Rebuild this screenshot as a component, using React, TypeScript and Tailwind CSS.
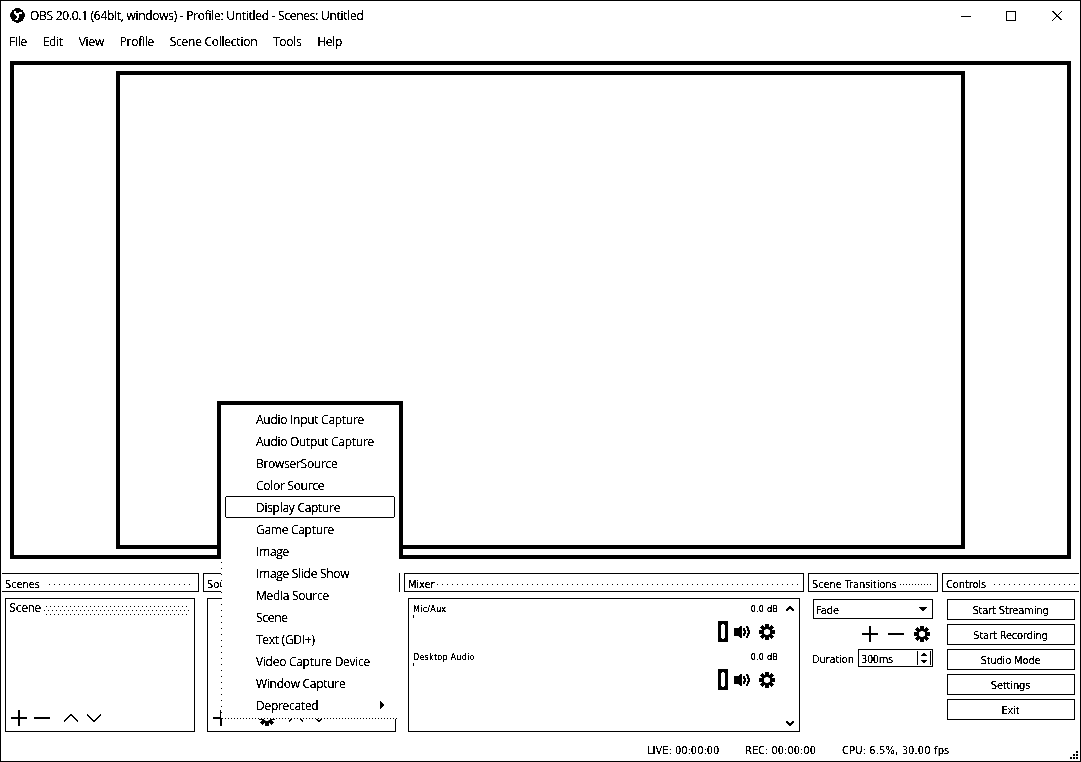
import React from "react";

const ui = "font-['Open_Sans',sans-serif] text-[12px] leading-[22px]";
const dlg = "font-['DejaVu_Sans_Condensed','DejaVu_Sans',sans-serif] text-[11px] leading-[13px] [font-stretch:condensed]";

function Plus({ className = "" }: { className?: string }) {
  return (
    <svg className={className} width="16" height="16" viewBox="0 0 16 16" shapeRendering="crispEdges">
      <path d="M7 0h2v16H7zM0 7h16v2H0z" />
    </svg>
  );
}

function Minus({ className = "" }: { className?: string }) {
  return (
    <svg className={className} width="16" height="16" viewBox="0 0 16 16" shapeRendering="crispEdges">
      <path d="M0 7h16v2H0z" />
    </svg>
  );
}

function Chevron({ down = false, className = "" }: { down?: boolean; className?: string }) {
  return (
    <svg className={className} width="14" height="8" viewBox="0 0 14 8" fill="none" stroke="black" strokeWidth="1.4">
      <path d={down ? "M0 .5l7 7 7-7" : "M0 7.5l7-7 7 7"} />
    </svg>
  );
}

function Gear({ className = "" }: { className?: string }) {
  return (
    <svg className={className} width="16" height="16" viewBox="0 0 16 16">
      <path
        fillRule="evenodd"
        d="M6.5 0h3v2.300l1.400.6L12.600 1.300l2.100 2.100L13 5.100l.6 1.400H16v3h-2.400L13 10.900l1.700 1.700-2.100 2.100L10.900 13l-1.400.6V16h-3v-2.400L5.100 13l-1.700 1.700-2.100-2.100L3 10.900l-.6-1.400H0v-3h2.400L3 5.100 1.300 3.400l2.100-2.100L5.100 3l1.400-.6zM8 5a3 3 0 1 0 0 6 3 3 0 0 0 0-6z"
      />
    </svg>
  );
}

function Speaker() {
  return (
    <svg width="16" height="14" viewBox="0 0 16 14">
      <path d="M0 3h4L7.500.500v13L4 11H0z" />
      <path d="M9.500 3.500q2.600 3.500 0 7M12.500 1q4.500 6 0 12" fill="none" stroke="black" strokeWidth="1.900" />
    </svg>
  );
}

function Dots({ className = "", dense = false }: { className?: string; dense?: boolean }) {
  return (
    <span
      className={`h-px ${
        dense
          ? "bg-[repeating-linear-gradient(90deg,black_0,black_1px,transparent_1px,transparent_3px)]"
          : "bg-[repeating-linear-gradient(90deg,black_0,black_1px,transparent_1px,transparent_5px)]"
      } ${className}`}
    />
  );
}

function DockTitle({
  children,
  className = "",
  dots = "",
  dense = false,
}: {
  children: React.ReactNode;
  className?: string;
  dots?: string;
  dense?: boolean;
}) {
  return (
    <div className={`flex h-[19px] items-center border border-black pl-[3px] pr-[4px] ${className}`}>
      <span className="pt-[3px] tracking-[-0.1px] whitespace-nowrap">{children}</span>
      <Dots dense={dense} className={`mt-[4px] flex-1 ${dots}`} />
    </div>
  );
}

function Channel({ name }: { name: string }) {
  return (
    <div className="h-[48px]">
      <div className="flex justify-between pr-px pt-[4px] text-[9px] leading-[12px]">
        <span className="tracking-[0.2px]">{name}</span>
        <span className="tracking-[0.2px]">0.0 dB</span>
      </div>
      <div className="h-[3px] w-px bg-black" />
      <div className="flex items-center justify-end pr-[4px] pt-[3px]">
        <span className="h-[21px] w-[10px] border-[3px] border-black">
          <span className="block h-full w-full rounded-[2px] shadow-[0_0_0_1px_black]" />
        </span>
        <span className="ml-[6px]"><Speaker /></span>
        <Gear className="ml-[9px]" />
      </div>
    </div>
  );
}

const sources = [
  "Audio Input Capture", "Audio Output Capture", "BrowserSource", "Color Source", "Display Capture",
  "Game Capture", "Image", "Image Slide Show", "Media Source", "Scene", "Text (GDI+)",
  "Video Capture Device", "Window Capture", "Deprecated",
];

function SourceMenu() {
  return (
    <div className={`absolute left-[216px] top-[400px] h-[319px] w-[186px] ${ui}`}>
      <div className="absolute inset-x-0 top-0 h-[158px] border-4 border-b-0 border-black bg-white" />
      <div className="absolute left-[4px] top-[157px] flex h-[161px] w-[178px] items-end bg-white">
        <span className="h-full w-px bg-[repeating-linear-gradient(0deg,black_0,black_1px,transparent_1px,transparent_6px)]" />
        <Dots dense className="flex-1" />
      </div>
      <ul className="relative px-[8px] pt-[7px]">
        {sources.map((s) => (
          <li
            key={s}
            className={`flex h-[22px] w-[170px] items-center justify-between border pl-[30px] pr-[10px] ${
              s === "Display Capture" ? "rounded-[2px] border-black" : "border-transparent"
            }`}
          >
            <span className="pt-[2px] tracking-[-0.28px]">{s}</span>
            {s === "Deprecated" && (
              <svg width="4" height="8" viewBox="0 0 4 8"><path d="M0 0l4 4-4 4z" /></svg>
            )}
          </li>
        ))}
      </ul>
    </div>
  );
}

export default function App() {
  return (
    <div className="relative flex h-[762px] w-[1081px] flex-col overflow-hidden border border-black bg-white text-black [filter:grayscale(1)_brightness(0.79)_contrast(20)]">
      <header className={`flex h-[29px] items-center pl-[9px] ${ui}`}>
        <svg width="15" height="15" viewBox="0 0 15 15">
          <circle cx="7.500" cy="7.500" r="7.200" />
          <path d="M4.500 2.500q0 3.500 3 4.500M12 5.500q-3-1.500-4.500 1.500M7.500 7q1.500 3-2 5" fill="none" stroke="white" strokeWidth="2" />
        </svg>
        <h1 className="ml-[5px] flex-1 tracking-[-0.28px]">OBS 20.0.1 (64bit, windows) - Profile: Untitled - Scenes: Untitled</h1>
        <svg className="mr-[17px]" width="102" height="12" viewBox="0 0 102 12" fill="none" stroke="black">
          <path d="M0 6.500h10M45.500 1.500h9v9h-9z" />
          <path d="M91.500 1l9.500 9.500M101 1l-9.500 9.500" strokeWidth="0.900" />
        </svg>
      </header>
      <nav className={`flex h-[23px] items-center gap-[15.7px] pl-[8px] pt-px tracking-[-0.25px] ${ui}`}>
        {["File", "Edit", "View", "Profile", "Scene Collection", "Tools", "Help"].map((m) => (
          <span key={m}>{m}</span>
        ))}
      </nav>
      <main className="mx-[9px] mt-[8px] flex h-[498px] border-4 border-black pl-[102px] pt-[6px]">
        <div className="h-[478px] w-[849px] border-4 border-black" />
      </main>
      <div className={`mt-[14px] flex h-[160px] gap-[4px] pl-px ${dlg}`}>
        <section className="w-[197px]">
          <DockTitle className="border-l-0" dots="ml-[9px]">Scenes</DockTitle>
          <div className="ml-[3px] mt-[6px] flex h-[134px] w-[190px] flex-col justify-between border border-black px-[3px] pt-[3px]">
            <div className="flex items-center">
              <span className="text-[12px] tracking-[-0.2px]">Scene</span>
              <div className="ml-[3px] mt-[3px] flex flex-1 flex-col gap-[3px] pr-px">
                {["ml-[2px]", "ml-0", "ml-[2px]"].map((m, i) => (
                  <span
                    key={i}
                    className={`h-px bg-[repeating-linear-gradient(90deg,black_0,black_1px,transparent_1px,transparent_4px)] ${m}`}
                  />
                ))}
              </div>
            </div>
            <div className="flex items-center pb-[5px] pl-[2px]">
              <Plus /><Minus className="ml-[7px]" />
              <Chevron className="ml-[14px]" /><Chevron down className="ml-[9px]" />
            </div>
          </div>
        </section>
        <section className="w-[197px]">
          <DockTitle>Sources</DockTitle>
          <div className="ml-[4px] mt-[6px] flex h-[134px] w-[189px] items-end border border-black pb-[5px] pl-[5px]">
            <Plus /><Minus className="ml-[7px]" /><Gear className="ml-[7px]" />
            <Chevron className="mb-[4px] ml-[14px]" /><Chevron down className="mb-[4px] ml-[9px]" />
          </div>
        </section>
        <section className="w-[400px]">
          <DockTitle dots="ml-[3px]">Mixer</DockTitle>
          <div className="ml-[4px] mt-[6px] flex h-[134px] w-[392px] justify-between border border-black pl-[4px]">
            <div className="w-[366px]">
              <Channel name="Mic/Aux" />
              <Channel name="Desktop Audio" />
            </div>
            <div className="flex flex-col justify-between pb-[5px] pr-[5px] pt-[7px]">
              <svg width="8" height="5" viewBox="0 0 8 5" fill="none" stroke="black" strokeWidth="1.300"><path d="M.5 4.500L4 1l3.500 3.500" /></svg>
              <svg width="8" height="5" viewBox="0 0 8 5" fill="none" stroke="black" strokeWidth="1.500"><path d="M.5.500L4 4 7.500.500" /></svg>
            </div>
          </div>
        </section>
        <section className="w-[130px]">
          <DockTitle dense dots="ml-[4px]">Scene Transitions</DockTitle>
          <div className="ml-[5px] mt-[7px] flex w-[120px] flex-col">
            <div className="flex h-[20px] items-center justify-between border border-black pl-[2px] pr-[5px]">
              <span className="pt-[2px]">Fade</span>
              <svg width="8" height="4" viewBox="0 0 8 4"><path d="M0 0h8L4 4z" /></svg>
            </div>
            <div className="mt-[7px] flex justify-end gap-[10px] pr-[3px]"><Plus /><Minus /><Gear /></div>
            <div className="mt-[7px] flex h-[18px] items-center justify-between">
              <span className="-ml-px pt-[2px] tracking-[-0.15px]">Duration</span>
              <div className="flex h-[18px] w-[75px] items-center justify-between border border-black pl-[2px] pr-[1px]">
                <span className="pt-[2px] tracking-[-0.4px]">300ms</span>
                <span className="flex h-[14px] w-[14px] items-center justify-center border-x border-black">
                  <svg width="6" height="10" viewBox="0 0 6 10"><path d="M0 3l3-3 3 3zM0 7h6l-3 3z" /></svg>
                </span>
              </div>
            </div>
          </div>
        </section>
        <section className="w-[137px]">
          <DockTitle className="border-r-0" dots="ml-[8px]">Controls</DockTitle>
          <div className="ml-[5px] mt-[7px] flex w-[128px] flex-col gap-[4px]">
            {["Start Streaming", "Start Recording", "Studio Mode", "Settings", "Exit"].map((b) => (
              <button key={b} className="flex h-[21px] items-center justify-center border border-black pr-px pt-px tracking-[-0.15px]">{b}</button>
            ))}
          </div>
        </section>
      </div>
      <footer className={`flex flex-1 items-center pl-[646px] pt-[7px] ${dlg}`}>
        <span className="w-[98px]">LIVE: 00:00:00</span>
        <span className="w-[97px]">REC: 00:00:00</span>
        <span className="flex-1 tracking-[0.15px]">CPU: 6.5%, 30.00 fps</span>
        <svg className="mr-[2px] mt-[8px]" width="8" height="8" viewBox="0 0 8 8" shapeRendering="crispEdges">
          <path d="M6 0h2v2H6zM3 3h2v2H3zM6 3h2v2H6zM0 6h2v2H0zM3 6h2v2H3zM6 6h2v2H6z" />
        </svg>
      </footer>
      <SourceMenu />
    </div>
  );
}
